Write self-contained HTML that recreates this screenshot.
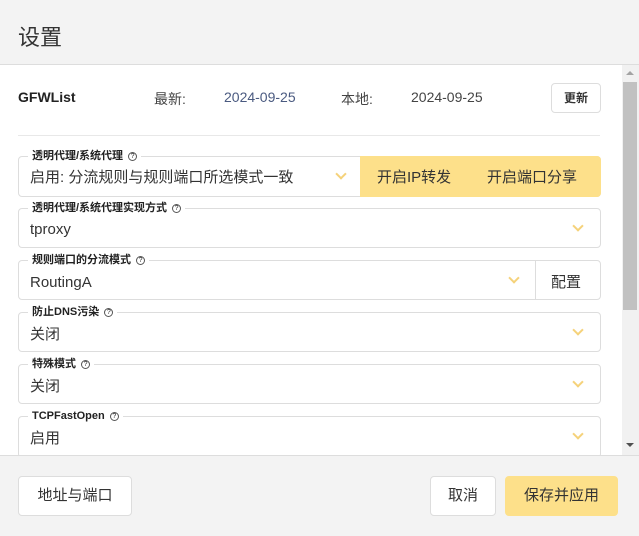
<!DOCTYPE html>
<html><head><meta charset="utf-8"><style>
*{box-sizing:border-box;margin:0;padding:0}
body{width:639px;height:536px;overflow:hidden;background:#fff;font-family:"Liberation Sans","Noto Sans CJK SC",sans-serif;color:#333;position:relative}
.a{position:absolute}
.hdr{left:0;top:0;width:639px;height:65px;background:#f3f3f3;border-bottom:1px solid #ddd}
.ftr{left:0;top:455px;width:639px;height:81px;background:#f3f3f3;border-top:1px solid #ddd}
.box{border:1px solid #ddd;border-radius:4px;background:#fff}
.lg{font-size:11px;font-weight:bold;color:#222;background:#fff;padding:0 4px;line-height:13px}
.q{display:inline-block;width:9px;height:9px;border:1px solid #555;border-radius:50%;font-size:7px;line-height:8px;text-align:center;font-weight:normal;vertical-align:1px;margin-left:2px}
.val{font-size:15px;color:#333}
.chev{width:8px;height:8px;border-right:2px solid #f5d27a;border-bottom:2px solid #f5d27a;transform:rotate(45deg)}
.btn{border:1px solid #ddd;border-radius:4px;background:#fff;font-size:15px;text-align:center;color:#333}
</style></head><body>
<div class="a hdr"></div>
<div class="a" style="left:18px;top:20px;font-size:22px;color:#333">设置</div>

<div class="a" style="left:18px;top:89px;font-size:14px;font-weight:bold;color:#222">GFWList</div>
<div class="a" style="left:154px;top:89px;font-size:14px;color:#444">最新:</div>
<div class="a" style="left:224px;top:89px;font-size:14px;color:#4a5a80">2024-09-25</div>
<div class="a" style="left:341px;top:89px;font-size:14px;color:#444">本地:</div>
<div class="a" style="left:411px;top:89px;font-size:14px;color:#444">2024-09-25</div>
<div class="a btn" style="left:551px;top:83px;width:50px;height:30px;font-size:12px;font-weight:bold;line-height:28px">更新</div>
<div class="a" style="left:18px;top:135px;width:582px;height:1px;background:#e8e8e8"></div>

<div class="a box" style="left:18px;top:156px;width:583px;height:41px;border-radius:4px"></div>
<div class="a" style="left:360px;top:156px;width:241px;height:41px;background:#fde08a;border-radius:0 4px 4px 0"></div>
<div class="a" style="left:377px;top:166px;font-size:15px;color:#333">开启IP转发</div>
<div class="a" style="left:487px;top:166px;font-size:15px;color:#333">开启端口分享</div>
<div class="a lg" style="left:28px;top:150px">透明代理/系统代理 <span class="q">?</span></div>
<div class="a val" style="left:30px;top:166px">启用: 分流规则与规则端口所选模式一致</div>
<div class="a chev" style="left:337px;top:170px"></div>

<div class="a box" style="left:18px;top:208px;width:583px;height:40px"></div>
<div class="a lg" style="left:28px;top:202px">透明代理/系统代理实现方式 <span class="q">?</span></div>
<div class="a val" style="left:30px;top:221px">tproxy</div>
<div class="a chev" style="left:574px;top:222px"></div>

<div class="a box" style="left:18px;top:260px;width:583px;height:40px"></div>
<div class="a" style="left:535px;top:260px;width:1px;height:40px;background:#ddd"></div>
<div class="a lg" style="left:28px;top:254px">规则端口的分流模式 <span class="q">?</span></div>
<div class="a val" style="left:30px;top:274px">RoutingA</div>
<div class="a chev" style="left:510px;top:274px"></div>
<div class="a val" style="left:551px;top:271px">配置</div>

<div class="a box" style="left:18px;top:312px;width:583px;height:40px"></div>
<div class="a lg" style="left:28px;top:306px">防止DNS污染 <span class="q">?</span></div>
<div class="a val" style="left:30px;top:323px">关闭</div>
<div class="a chev" style="left:574px;top:326px"></div>

<div class="a box" style="left:18px;top:364px;width:583px;height:40px"></div>
<div class="a lg" style="left:28px;top:358px">特殊模式 <span class="q">?</span></div>
<div class="a val" style="left:30px;top:375px">关闭</div>
<div class="a chev" style="left:574px;top:378px"></div>

<div class="a box" style="left:18px;top:416px;width:583px;height:42px"></div>
<div class="a lg" style="left:28px;top:410px">TCPFastOpen <span class="q">?</span></div>
<div class="a val" style="left:30px;top:427px">启用</div>
<div class="a chev" style="left:574px;top:430px"></div>

<div class="a" style="left:622px;top:65px;width:17px;height:390px;background:#f1f1f1"></div>
<div class="a" style="left:623px;top:82px;width:14px;height:228px;background:#c1c1c1"></div>
<div class="a" style="left:626px;top:71px;width:0;height:0;border-left:4px solid transparent;border-right:4px solid transparent;border-bottom:4px solid #a3a3a3"></div>
<div class="a" style="left:626px;top:443px;width:0;height:0;border-left:4px solid transparent;border-right:4px solid transparent;border-top:4px solid #505050"></div>

<div class="a ftr"></div>
<div class="a btn" style="left:18px;top:476px;width:114px;height:40px;line-height:38px">地址与端口</div>
<div class="a btn" style="left:430px;top:476px;width:66px;height:40px;line-height:38px">取消</div>
<div class="a btn" style="left:505px;top:476px;width:113px;height:40px;line-height:38px;background:#fde08a;border-color:#fde08a">保存并应用</div>
</body></html>
